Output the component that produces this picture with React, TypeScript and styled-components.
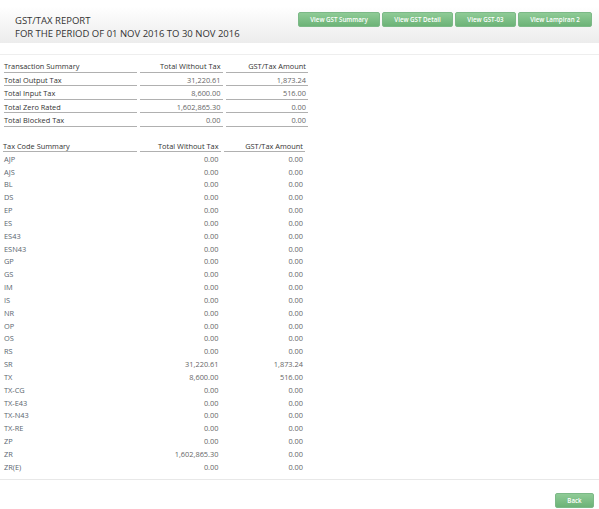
import React from "react";
import styled, { createGlobalStyle } from "styled-components";

const GlobalStyle = createGlobalStyle`
  html, body { margin: 0; padding: 0; background: #fff; }
  body { font-family: "Open Sans", "Liberation Sans", sans-serif; color: #444; overflow: hidden; }
`;

const summaryRows = [
    ["Total Output Tax", "31,220.61", "1,873.24"],
    ["Total Input Tax", "8,600.00", "516.00"],
    ["Total Zero Rated", "1,602,865.30", "0.00"],
    ["Total Blocked Tax", "0.00", "0.00"],
];

const codeRows = [
    ["AJP", "0.00", "0.00"],
    ["AJS", "0.00", "0.00"],
    ["BL", "0.00", "0.00"],
    ["DS", "0.00", "0.00"],
    ["EP", "0.00", "0.00"],
    ["ES", "0.00", "0.00"],
    ["ES43", "0.00", "0.00"],
    ["ESN43", "0.00", "0.00"],
    ["GP", "0.00", "0.00"],
    ["GS", "0.00", "0.00"],
    ["IM", "0.00", "0.00"],
    ["IS", "0.00", "0.00"],
    ["NR", "0.00", "0.00"],
    ["OP", "0.00", "0.00"],
    ["OS", "0.00", "0.00"],
    ["RS", "0.00", "0.00"],
    ["SR", "31,220.61", "1,873.24"],
    ["TX", "8,600.00", "516.00"],
    ["TX-CG", "0.00", "0.00"],
    ["TX-E43", "0.00", "0.00"],
    ["TX-N43", "0.00", "0.00"],
    ["TX-RE", "0.00", "0.00"],
    ["ZP", "0.00", "0.00"],
    ["ZR", "1,602,865.30", "0.00"],
    ["ZR(E)", "0.00", "0.00"],
];

const App = () => {
    return (
        <Page>
            <GlobalStyle />
            <Header>
                <Title>
                    GST/TAX REPORT
                    <br />
                    FOR THE PERIOD OF 01 NOV 2016 TO 30 NOV 2016
                </Title>
                <Actions>
                    <GreenButton $width={82}>View GST Summary</GreenButton>
                    <GreenButton $width={71}>View GST Detail</GreenButton>
                    <GreenButton $width={61}>View GST-03</GreenButton>
                    <GreenButton $width={74}>View Lampiran 2</GreenButton>
                </Actions>
            </Header>
            <Content>
                <SummaryGrid>
                    <SummaryCell>Transaction Summary</SummaryCell>
                    <SummaryCell $right>Total Without Tax</SummaryCell>
                    <SummaryCell $right>GST/Tax Amount</SummaryCell>
                    {summaryRows.map((row) => (
                        <React.Fragment key={row[0]}>
                            <SummaryCell>{row[0]}</SummaryCell>
                            <SummaryCell $right $muted>{row[1]}</SummaryCell>
                            <SummaryCell $right $muted>{row[2]}</SummaryCell>
                        </React.Fragment>
                    ))}
                </SummaryGrid>
                <CodeGrid>
                    <CodeHead>Tax Code Summary</CodeHead>
                    <CodeHead $right>Total Without Tax</CodeHead>
                    <CodeHead $right>GST/Tax Amount</CodeHead>
                    {codeRows.map((row) => (
                        <React.Fragment key={row[0]}>
                            <CodeLabel>{row[0]}</CodeLabel>
                            <CodeValue>{row[1]}</CodeValue>
                            <CodeValue>{row[2]}</CodeValue>
                        </React.Fragment>
                    ))}
                </CodeGrid>
            </Content>
            <Footer>
                <GreenButton $width={39}>Back</GreenButton>
            </Footer>
        </Page>
    );
};

export default App;

const Page = styled.div`
    width: 599px;
    height: 509px;
    overflow: hidden;
`;

const Header = styled.div`
    height: 43px;
    box-sizing: border-box;
    padding: 14px 7px 0 15px;
    display: flex;
    justify-content: space-between;
    align-items: flex-start;
    background: linear-gradient(to bottom, #ffffff 0%, #ffffff 15%, #ececec 100%);
`;

const Title = styled.div`
    font-size: 9.5px;
    line-height: 13px;
    color: #333;
`;

const Actions = styled.div`
    display: flex;
    gap: 2px;
    margin-top: -2px;
`;

const GreenButton = styled.div<{ $width: number }>`
    width: ${(p) => p.$width}px;
    height: 15px;
    box-sizing: border-box;
    border-radius: 2px;
    border: 1px solid #7cb987;
    background: linear-gradient(to bottom, #8fcb96 0%, #6cb377 100%);
    color: #fff;
    font-size: 6.2px;
    font-weight: 600;
    line-height: 13px;
    text-align: center;
    white-space: nowrap;
`;

const Content = styled.div`
    margin-top: 11px;
    height: 426px;
    box-sizing: border-box;
    border-top: 1px solid #eeeeee;
    border-bottom: 1px solid #e8e8e8;
    padding: 4px 0 0 4px;
`;

const SummaryGrid = styled.div`
    display: grid;
    grid-template-columns: 136px 86px 82px;
    grid-auto-rows: 13.5px;
    & > *:nth-child(3n + 1) { margin-right: 3px; }
    & > *:nth-child(3n + 2) { margin-right: 3.5px; }
`;

const SummaryCell = styled.div<{ $right?: boolean; $muted?: boolean }>`
    font-size: 7.4px;
    line-height: 12px;
    padding: 1px ${(p) => (p.$right ? "2px" : "0")} 0 0;
    color: ${(p) => (p.$muted ? "#666" : "#333")};
    text-align: ${(p) => (p.$right ? "right" : "left")};
    border-bottom: 1px solid #b0b0b0;
    box-sizing: border-box;
`;

const CodeGrid = styled.div`
    display: grid;
    grid-template-columns: 137px 84px 81px;
    grid-auto-rows: 12.83px;
    margin: 13.5px 0 0 -1px;
    & > *:nth-child(3n + 1) { margin-right: 3px; }
    & > *:nth-child(3n + 2) { margin-right: 3.5px; }
`;

const CodeHead = styled.div<{ $right?: boolean }>`
    font-size: 7.4px;
    line-height: 12px;
    padding-right: ${(p) => (p.$right ? "2px" : "0")};
    margin-bottom: 1px;
    color: #333;
    text-align: ${(p) => (p.$right ? "right" : "left")};
    border-bottom: 1px solid #b0b0b0;
    box-sizing: border-box;
`;

const CodeLabel = styled.div`
    font-size: 7.4px;
    line-height: 12.83px;
    color: #5a6670;
    padding-left: 1px;
`;

const CodeValue = styled.div`
    font-size: 7.4px;
    line-height: 12.83px;
    color: #666;
    text-align: right;
    padding-right: 2px;
`;

const Footer = styled.div`
    display: flex;
    justify-content: flex-end;
    padding: 13px 5px 0 0;
`;
